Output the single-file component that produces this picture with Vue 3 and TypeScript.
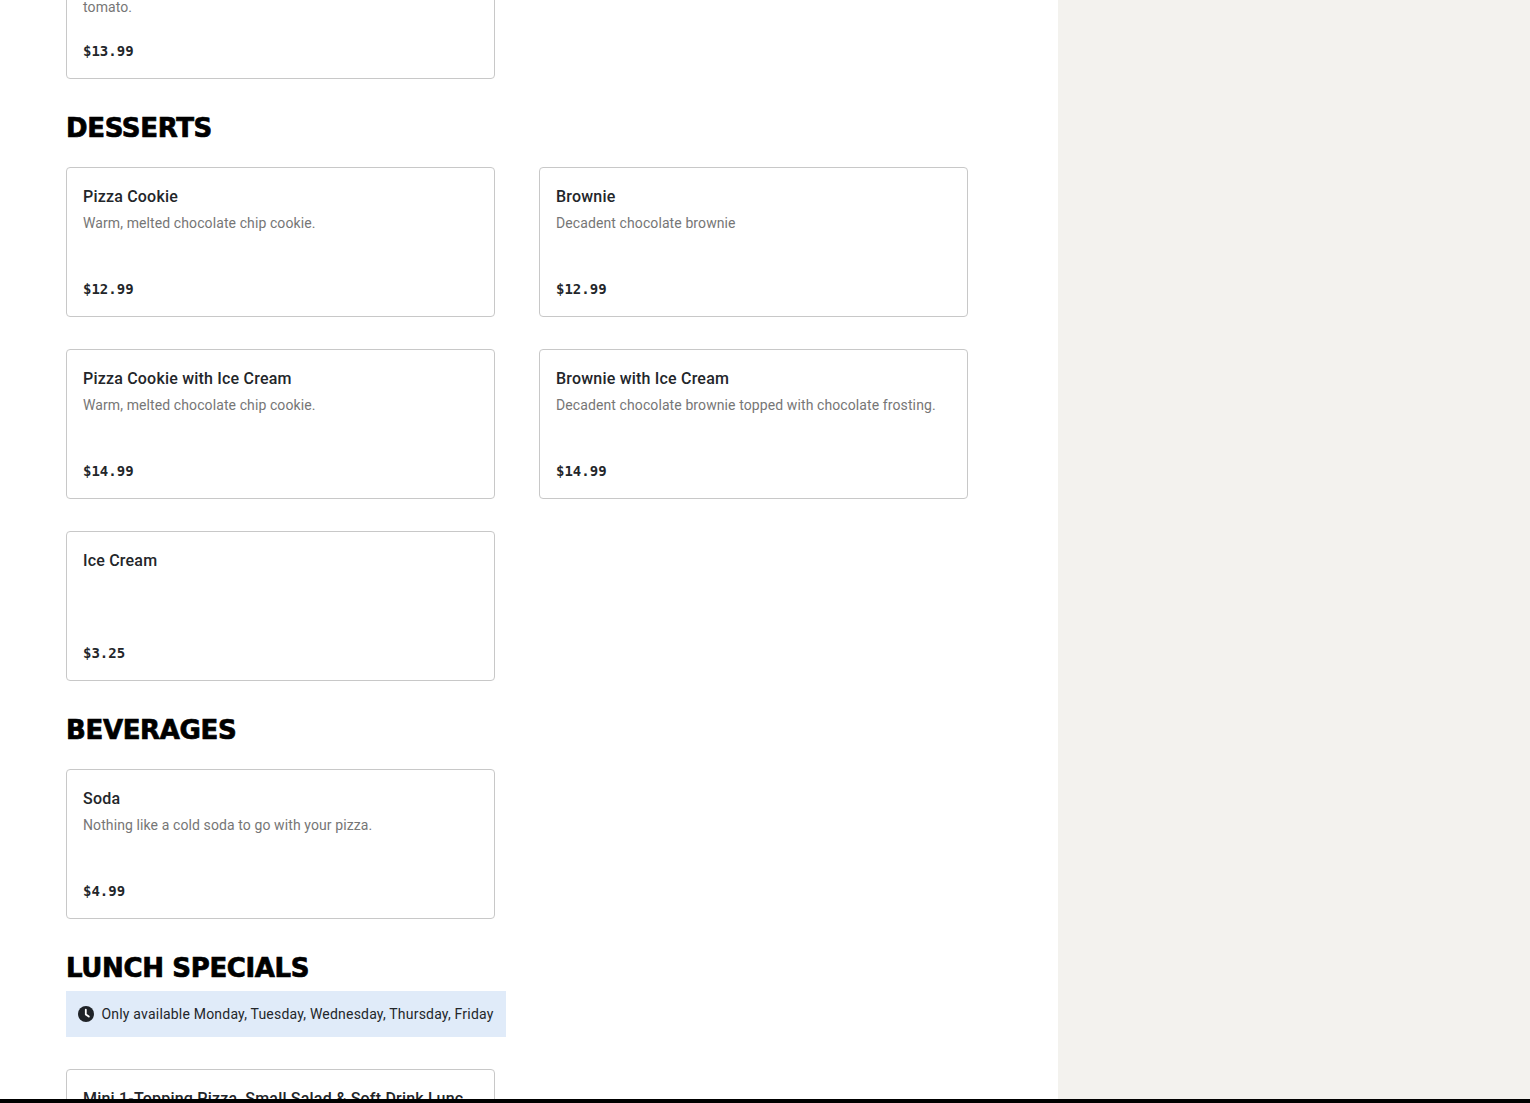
<script setup lang="ts">
interface Item { name: string; desc?: string; price: string }
const pizzaTail: Item[] = [{ name: 'Margherita Pizza', desc: 'Fresh mozzarella, basil, olive oil, fresh oregano, sliced roma tomato.', price: '$13.99' }]
const desserts: Item[] = [
  { name: 'Pizza Cookie', desc: 'Warm, melted chocolate chip cookie.', price: '$12.99' },
  { name: 'Brownie', desc: 'Decadent chocolate brownie', price: '$12.99' },
  { name: 'Pizza Cookie with Ice Cream', desc: 'Warm, melted chocolate chip cookie.', price: '$14.99' },
  { name: 'Brownie with Ice Cream', desc: 'Decadent chocolate brownie topped with chocolate frosting.', price: '$14.99' },
  { name: 'Ice Cream', price: '$3.25' },
]
const beverages: Item[] = [{ name: 'Soda', desc: 'Nothing like a cold soda to go with your pizza.', price: '$4.99' }]
const lunch: Item[] = [{ name: 'Mini 1-Topping Pizza, Small Salad & Soft Drink Lunc', desc: 'Lunch special.', price: '$11.99' }]
const sections = [
  { title: 'DESSERTS', items: desserts },
  { title: 'BEVERAGES', items: beverages },
]
</script>

<template>
  <div class="screen">
    <div class="viewport">
      <main class="menu">
        <div class="grid">
          <article v-for="it in pizzaTail" :key="it.name" class="card">
            <h3 class="name">{{ it.name }}</h3>
            <p class="desc">{{ it.desc }}</p>
            <span class="price">{{ it.price }}</span>
          </article>
        </div>
        <section v-for="s in sections" :key="s.title" class="section">
          <h2 class="heading">{{ s.title }}</h2>
          <div class="grid spaced">
            <article v-for="it in s.items" :key="it.name" class="card">
              <h3 class="name">{{ it.name }}</h3>
              <p class="desc">{{ it.desc }}</p>
              <span class="price">{{ it.price }}</span>
            </article>
          </div>
        </section>
        <section class="section">
          <h2 class="heading">LUNCH SPECIALS</h2>
          <div class="notice">
            <svg class="clock" viewBox="0 0 16 16" width="16" height="16" aria-hidden="true">
              <circle cx="8" cy="8" r="8" fill="#1f2328" />
              <path d="M7.8 3.6V8.4l3 2.2" fill="none" stroke="#fff" stroke-width="1.8" stroke-linecap="round" stroke-linejoin="round" />
            </svg>
            <span>Only available Monday, Tuesday, Wednesday, Thursday, Friday</span>
          </div>
          <div class="grid spaced">
            <article v-for="it in lunch" :key="it.name" class="card">
              <h3 class="name">{{ it.name }}</h3>
              <p class="desc">{{ it.desc }}</p>
              <span class="price">{{ it.price }}</span>
            </article>
          </div>
        </section>
      </main>
      <aside class="side"></aside>
    </div>
    <div class="bar"></div>
  </div>
</template>

<style>
html, body { margin: 0; background: #fff; overflow: hidden; }
</style>

<style scoped>
.screen {
  height: 1103px;
  display: flex;
  flex-direction: column;
  font-family: Roboto, "Liberation Sans", sans-serif;
}
.viewport {
  flex: 1;
  min-height: 0;
  display: flex;
  overflow: hidden;
  background: #fff;
}
.menu {
  width: 1058px;
  box-sizing: border-box;
  flex: none;
  padding: 0 90px 0 66px;
  margin-top: -71px;
}
.side {
  flex: 1;
  background: #f3f2ee;
}
.bar {
  height: 4px;
  background: #000;
  flex: none;
}
.grid {
  display: grid;
  grid-template-columns: 429px 429px;
  column-gap: 44px;
  row-gap: 32px;
}
.spaced { padding-top: 16px; }
.section { margin-top: 32px; }
.heading {
  margin: 0 0 6px;
  font-family: "DejaVu Sans", sans-serif;
  font-weight: 700;
  font-size: 26px;
  line-height: 34px;
  color: #000;
  letter-spacing: -0.35px;
  -webkit-text-stroke: 0.7px #000;
}
.card {
  box-sizing: border-box;
  height: 150px;
  padding: 16px;
  border: 1px solid #c8c8c8;
  border-radius: 4px;
  background: #fff;
  display: flex;
  flex-direction: column;
}
.name {
  margin: 1px 0 0;
  font-size: 16px;
  line-height: 24px;
  font-weight: 500;
  color: #23262a;
  letter-spacing: 0.2px;
}
.desc {
  margin: 3px 0 0;
  min-height: 44px;
  font-size: 14px;
  line-height: 22px;
  color: #767676;
  letter-spacing: 0.1px;
}
.price {
  margin-top: auto;
  margin-bottom: 1px;
  font-family: "DejaVu Sans Mono", monospace;
  font-weight: 700;
  font-size: 14px;
  line-height: 20px;
  color: #23262a;
}
.notice {
  width: 440px;
  height: 46px;
  box-sizing: border-box;
  padding: 0 12px;
  margin-bottom: 16px;
  display: flex;
  align-items: center;
  gap: 7.5px;
  background: #e0ebf9;
  font-size: 14px;
  letter-spacing: 0.2px;
  white-space: nowrap;
  color: #23262a;
}
.clock { flex: none; }
</style>
